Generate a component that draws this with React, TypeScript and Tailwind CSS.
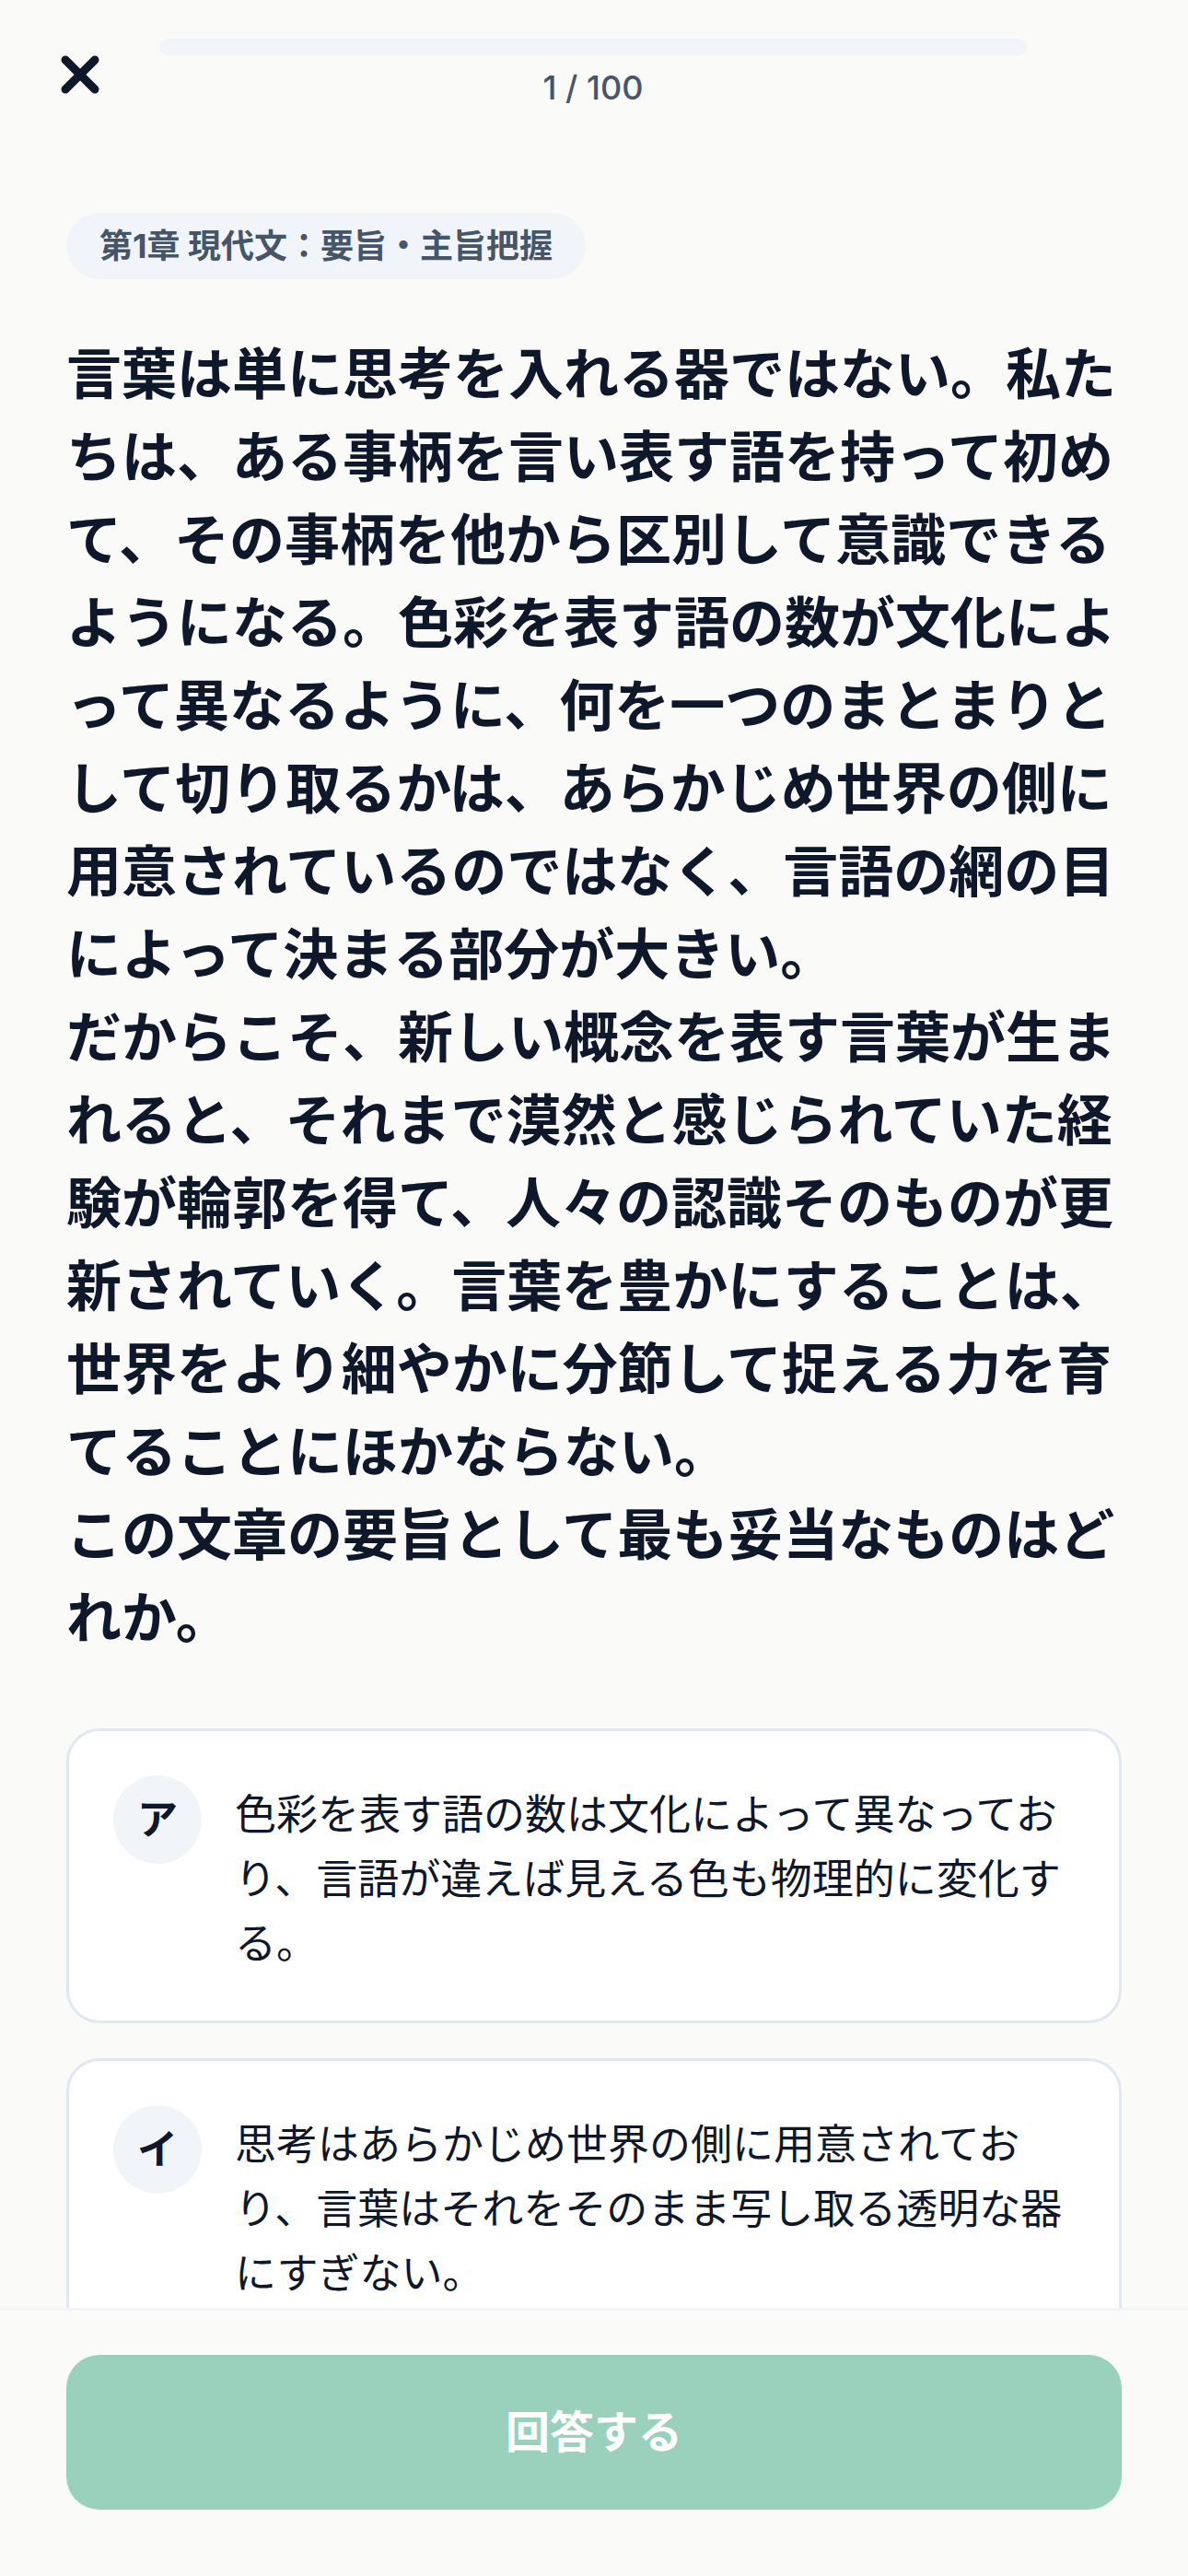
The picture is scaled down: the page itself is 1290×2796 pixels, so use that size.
import React from "react";

const choices = [
  { label: "ア", text: "色彩を表す語の数は文化によって異なっており、言語が違えば見える色も物理的に変化する。" },
  { label: "イ", text: "思考はあらかじめ世界の側に用意されており、言葉はそれをそのまま写し取る透明な器にすぎない。" },
];

export default function App() {
  return (
    <div className="w-[1290px] h-[2796px] flex flex-col overflow-hidden bg-[#fafaf9] font-['Inter','Noto_Sans_CJK_JP',sans-serif] text-[#0f172a]">
      {/* Header */}
      <header className="flex items-center pt-[42px] pl-[66px] pr-[175px]">
        <button className="w-[42px] h-[42px] shrink-0" aria-label="閉じる">
          <svg viewBox="0 0 42 42" className="w-[42px] h-[42px]">
            <path d="M5 5 L37 37 M37 5 L5 37" stroke="#0f172a" strokeWidth="9" strokeLinecap="round" fill="none" />
          </svg>
        </button>
        <div className="flex-1 ml-[65px] flex flex-col items-center">
          <div className="w-full h-[18px] rounded-full bg-[#f1f5f9]" />
          <div className="mt-[11px] text-[36px] leading-[48px] font-medium text-[#475569]">1 / 100</div>
        </div>
      </header>

      {/* Content */}
      <main className="flex-1 overflow-hidden px-[72px] pt-[112px]">
        <div className="inline-flex items-center h-[72px] px-[36px] rounded-full bg-[#f1f5f9] text-[36px] leading-[48px] font-bold text-[#475569]">
          第1章 現代文：要旨・主旨把握
        </div>

        <div className="mt-[58px] text-[60px] leading-[90px] font-bold text-[#0f172a]">
          <p>言葉は単に思考を入れる器ではない。私たちは、ある事柄を言い表す語を持って初めて、その事柄を他から区別して意識できるようになる。色彩を表す語の数が文化によって異なるように、何を一つのまとまりとして切り取るかは、あらかじめ世界の側に用意されているのではなく、言語の網の目によって決まる部分が大きい。</p>
          <p>だからこそ、新しい概念を表す言葉が生まれると、それまで漠然と感じられていた経験が輪郭を得て、人々の認識そのものが更新されていく。言葉を豊かにすることは、世界をより細やかに分節して捉える力を育てることにほかならない。</p>
          <p>この文章の要旨として最も妥当なものはどれか。</p>
        </div>

        <div className="mt-[75px] flex flex-col gap-[38px]">
          {choices.map((c) => (
            <div
              key={c.label}
              className="flex gap-[36px] p-[48px] rounded-[36px] border-[3px] border-[#e2e8f0] bg-white"
            >
              <div className="w-[96px] h-[96px] shrink-0 rounded-full bg-[#f1f5f9] flex items-center justify-center text-[44px] font-bold text-[#0f172a]">
                {c.label}
              </div>
              <p className="pt-[8px] text-[45px] leading-[70px] text-[#0f172a]">{c.text}</p>
            </div>
          ))}
        </div>
      </main>

      {/* Footer */}
      <footer className="shrink-0 border-t-[3px] border-[#f1f5f9] bg-[#fafaf9] px-[72px] pt-[48px] pb-[72px]">
        <button className="w-full h-[168px] rounded-[36px] bg-[#99d1bd] text-white text-[48px] font-bold">
          回答する
        </button>
      </footer>
    </div>
  );
}
